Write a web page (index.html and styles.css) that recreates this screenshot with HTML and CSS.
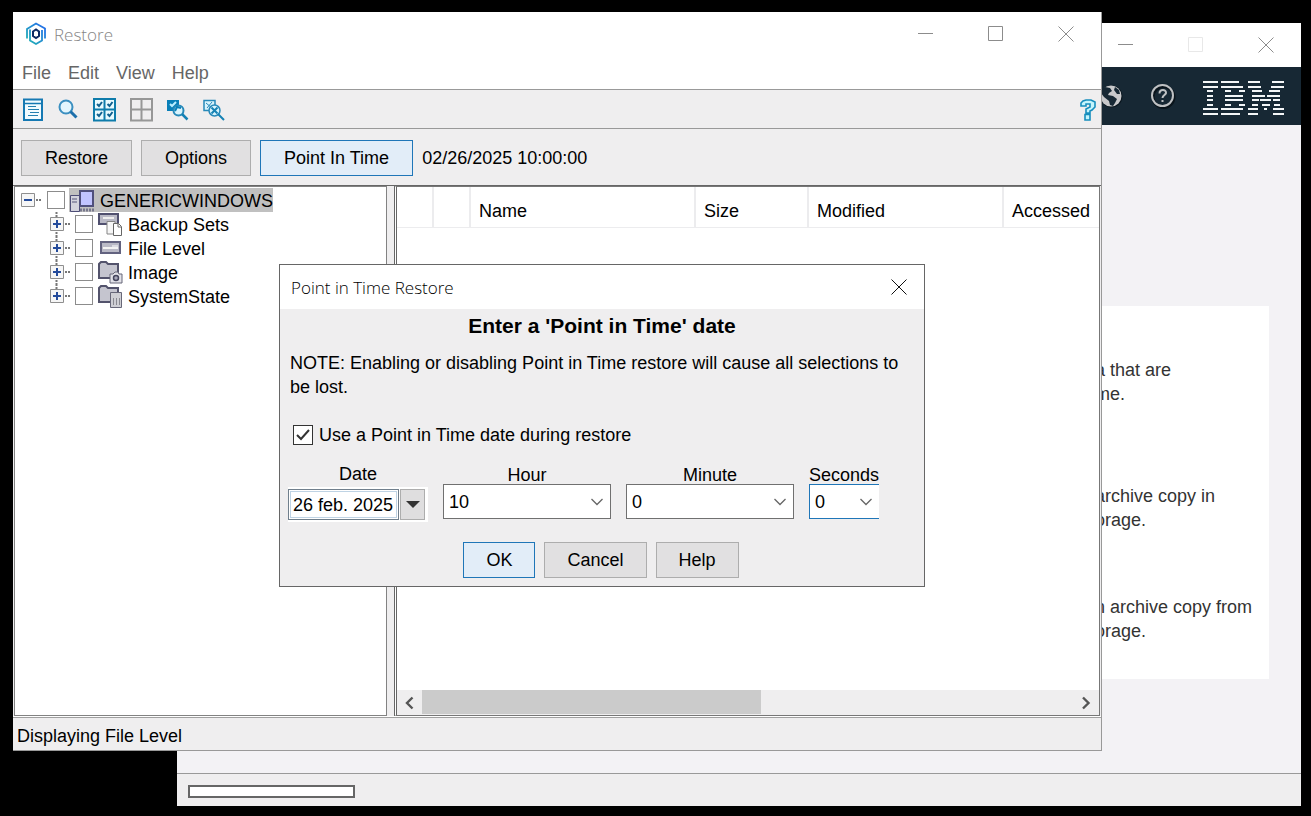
FILE: index.html
```html
<!DOCTYPE html>
<html lang="en">
<head>
<meta charset="utf-8">
<title>Restore</title>
<link rel="stylesheet" href="styles.css">
</head>
<body>
<main class="desktop">
  <section class="window hub" aria-label="Client hub">
    <div class="hub-title">
      <button class="win-btn" aria-label="Minimize hub"><svg width="16" height="16"><path d="M0 7.500h15" class="ln"/></svg></button>
      <button class="win-btn" aria-label="Maximize hub" disabled><svg width="16" height="16"><path d="M.5.500h14v14H.5z" class="ln faint"/></svg></button>
      <button class="win-btn" aria-label="Close hub"><svg width="16" height="16"><path d="M.5.500l15 15M15.500.500l-15 15" class="ln"/></svg></button>
    </div>
    <div class="banner">
      <svg class="globe" width="24" height="24" viewBox="0 0 24 24"><circle cx="12.500" cy="12.500" r="11" fill="#0b171f"/><circle cx="12" cy="12" r="10.500" fill="#c9c9cb"/><path d="M2 5l4-2 5 1 2 3-3 2-1 2 5 1 4 3-2 4-2 3-3-1-1-4-5-4-3-4zM16 3l4 3 1 4-3 0-3-4z" fill="#172834"/></svg>
      <svg class="ask" width="26" height="26" viewBox="0 0 26 26"><circle cx="13.500" cy="14" r="10.500" fill="none" stroke="#0a141b" stroke-width="3"/><circle cx="12.500" cy="12.500" r="10.500" fill="none" stroke="#bfc1c3" stroke-width="2"/><path d="M9.500 10.500c0-5 7-4.500 6.500-.5-.3 2-3.500 2.300-3.500 5M12.500 17v2" fill="none" stroke="#bfc1c3" stroke-width="2"/></svg>
      <svg class="ibm" width="81" height="34" viewBox="969 241 243 102" shape-rendering="crispEdges" role="img" aria-label="IBM"><path stroke="#f4f6f7" stroke-width="6" d="M969 244h45M1023 244h55M1104 244h36M1176 244h36M969 258h45M1023 258h67M1104 258h39M1172 258h40M981 271h18M1035 271h18M1077 271h18M1116 271h31M1168 271h31M981 285h18M1035 285h53M1116 285h38M1160 285h39M981 298h18M1035 298h53M1116 298h21M1140 298h34M1178 298h21M981 312h18M1035 312h18M1077 312h18M1116 312h17M1146 312h23M1182 312h17M969 325h45M1023 325h67M1104 325h29M1153 325h8M1180 325h32M969 339h45M1023 339h57M1104 339h29M1180 339h32"/></svg>
    </div>
    <div class="hub-body">
      <div class="hub-card">
        <p>a that are<br>me.</p>
        <p>archive copy in<br>orage.</p>
        <p>n archive copy from<br>orage.</p>
      </div>
    </div>
    <div class="hub-status"><div class="hub-progress"></div></div>
  </section>

  <section class="window restore" aria-label="Restore">
    <header class="titlebar">
      <svg width="22" height="24" viewBox="0 0 22 24" fill="none"><defs><linearGradient id="g" x1="1" y1="0" x2="0" y2="1"><stop offset="0" stop-color="#2468ee"/><stop offset="1" stop-color="#20b5b0"/></linearGradient></defs><path d="M2 16.500V7L11 1.500 20 6.500v10M5 7.500v11l6 3.500 6-3.500V8" stroke="url(#g)" stroke-width="1.800"/><path d="M8 9.500l3-2 3 2v4.500l-3 2-3-2z" stroke="#0c2a64" stroke-width="2"/></svg>
      <h1 class="title">Restore</h1>
      <div class="win-btns">
        <button class="win-btn" aria-label="Minimize"><svg width="16" height="16"><path d="M0 7.500h15" class="ln"/></svg></button>
        <button class="win-btn" aria-label="Maximize"><svg width="16" height="16"><path d="M.5.500h14v14H.5z" class="ln"/></svg></button>
        <button class="win-btn" aria-label="Close"><svg width="16" height="16"><path d="M.5.500l15 15M15.500.500l-15 15" class="ln"/></svg></button>
      </div>
    </header>
    <nav class="menu">
      <button>File</button><button>Edit</button><button>View</button><button>Help</button>
    </nav>
    <div class="toolbar">
      <button aria-label="Properties"><svg width="20" height="24" viewBox="0 0 20 24" fill="none"><path d="M1 1.500h18v20.500H1z" fill="#f2fbff" stroke="#1679b3" stroke-width="2"/><path d="M2 5.500h16" stroke="#1679b3" stroke-width="1.500"/><path d="M5 8.500h8M5 11.500h11M7 14.500h9M5 17.500h10" stroke="#237fb0"/></svg></button>
      <button aria-label="Find"><svg width="22" height="24" viewBox="0 0 22 24" fill="none"><circle cx="9" cy="9" r="6.500" fill="#e4f6fd" stroke="#3b8fc0" stroke-width="2"/><path d="M13.500 13.500l6 6" stroke="#1d6fab" stroke-width="3"/></svg></button>
      <button aria-label="Select all"><svg width="23" height="24" viewBox="0 0 23 24" fill="none"><path d="M1 1h21v21.500H1zM11.500 1v21.500M1 11.500h21" fill="#e9fbff" stroke="#0f7cab" stroke-width="2"/><path d="M4 6l2 2 3-4M14.500 6l2 2 3-4M4 16l2 2 3-4M14.500 16l2 2 3-4" stroke="#12618f" stroke-width="2"/></svg></button>
      <button aria-label="Deselect all"><svg width="23" height="24" viewBox="0 0 23 24" fill="none"><path d="M1 1h21v21.500H1zM11.500 1v21.500M1 11.500h21" stroke="#979797" stroke-width="2"/></svg></button>
      <button aria-label="Search and select"><svg width="22" height="24" viewBox="0 0 22 24" fill="none"><path d="M0 2h12v11H0z" fill="#087fb8"/><path d="M3 6l2 2 4-4" stroke="#b9edff" stroke-width="2"/><circle cx="11.500" cy="12.500" r="5" fill="#d9f4fd" stroke="#2789b9" stroke-width="2"/><path d="M8 13l2-4 4 1" stroke="#087fb8" stroke-width="2"/><path d="M15 16l5.500 5.500" stroke="#1582b5" stroke-width="2.500"/></svg></button>
      <button aria-label="Search and deselect"><svg width="22" height="24" viewBox="0 0 22 24" fill="none"><path d="M1 2.500h11v10H1z" fill="#d9f4fd" stroke="#2789b9" stroke-width="1.500"/><path d="M3 5l6 5M9 4l-5 6" stroke="#2789b9"/><circle cx="11.500" cy="12.500" r="5.500" fill="#d9f4fd" stroke="#2789b9" stroke-width="1.500"/><path d="M8.500 9.500l6 6M14.500 9.500l-6 6M15 16l6 6" stroke="#1582b5" stroke-width="2"/></svg></button>
      <button class="help-btn" aria-label="Context help"><svg width="17" height="22" viewBox="0 0 17 22"><path d="M1 6V4l2-2 3-1h5l4 2v5l-3 3-2 1v2H6v-4l4-2V5H6v2H1zM5 15.500h5V21H5z" fill="#c5f5fc" stroke="#178ebd" stroke-width="1.600"/></svg></button>
    </div>
    <div class="actions">
      <button class="btn">Restore</button>
      <button class="btn">Options</button>
      <button class="btn btn-active">Point In Time</button>
      <span>02/26/2025 10:00:00</span>
    </div>
    <div class="split">
      <div class="tree-pane">
        <ul class="tree">
          <li>
            <div class="node">
              <svg class="expander" width="26" height="24"><path d="M.5 5.500h13v13H.5z" class="exp"/><path d="M3 12h8" class="sign"/><path d="M15 12h6" class="dots"/></svg>
              <input class="tick" type="checkbox" aria-label="GENERICWINDOWS">
              <span class="node-label selected"><svg width="26" height="24" viewBox="0 0 26 24"><path d="M1.500 6.500h9v16h-9z" fill="#d2d2dc" stroke="#4d4d77"/><path d="M3 10h5M3 13h5" stroke="#55557a"/><path d="M11 2h13v15H11z" fill="#c1c4ff" stroke="#50507c" stroke-width="2"/><path d="M11 21h14" stroke="#77778c" stroke-width="3" stroke-dasharray="2 1"/></svg>GENERICWINDOWS</span>
            </div>
            <ul class="tree-kids">
              <li class="node">
                <svg class="expander" width="25" height="24"><path d="M6.500 0v5M6.500 20v4" class="dots"/><path d="M.5 5.500h13v13H.5z" class="exp"/><path d="M3 12h8M7 8v8" class="sign"/><path d="M15 12h6" class="dots"/></svg>
                <input class="tick" type="checkbox" id="n1">
                <label class="node-label" for="n1"><svg width="25" height="24" viewBox="0 0 25 24"><path d="M1 1h19v10H1z" fill="#b9b9c6" stroke="#50506f" stroke-width="2"/><path d="M5 5h11" stroke="#eee" stroke-width="2"/><path d="M9 8.500h8V21H9z" fill="#f6f6f6" stroke="#858585"/><path d="M15.500 10.500h5l3 3v9h-8z" fill="#fff" stroke="#666"/><path d="M20 11v3h3" fill="none" stroke="#666"/></svg>Backup Sets</label>
              </li>
              <li class="node">
                <svg class="expander" width="25" height="24"><path d="M6.500 0v5M6.500 20v4" class="dots"/><path d="M.5 5.500h13v13H.5z" class="exp"/><path d="M3 12h8M7 8v8" class="sign"/><path d="M15 12h6" class="dots"/></svg>
                <input class="tick" type="checkbox" id="n2">
                <label class="node-label" for="n2"><svg width="25" height="24" viewBox="0 0 25 24"><path d="M3 5h19v11H3z" fill="#b9b9c6" stroke="#62627f" stroke-width="2"/><path d="M5 11h15" stroke="#f3f3f3" stroke-width="2"/><path d="M14 9h6" stroke="#fff"/></svg>File Level</label>
              </li>
              <li class="node">
                <svg class="expander" width="25" height="24"><path d="M6.500 0v5M6.500 20v4" class="dots"/><path d="M.5 5.500h13v13H.5z" class="exp"/><path d="M3 12h8M7 8v8" class="sign"/><path d="M15 12h6" class="dots"/></svg>
                <input class="tick" type="checkbox" id="n3">
                <label class="node-label" for="n3"><svg width="25" height="24" viewBox="0 0 25 24"><path d="M1 18V3l2-2h5l2 2h10v14H1" fill="#c5c5cf" stroke="#53536c" stroke-width="2"/><path d="M12 13h3l2-2h3l1 2h3v9H12z" fill="#e2e2e8" stroke="#676778"/><circle cx="18" cy="17" r="2.500" fill="#aab" stroke="#45455d" stroke-width="1.500"/></svg>Image</label>
              </li>
              <li class="node">
                <svg class="expander" width="25" height="24"><path d="M6.500 0v5" class="dots"/><path d="M.5 5.500h13v13H.5z" class="exp"/><path d="M3 12h8M7 8v8" class="sign"/><path d="M15 12h6" class="dots"/></svg>
                <input class="tick" type="checkbox" id="n4">
                <label class="node-label" for="n4"><svg width="25" height="24" viewBox="0 0 25 24"><path d="M1 18V3l2-2h5l2 2h10v14H1" fill="#c5c5cf" stroke="#53536c" stroke-width="2"/><path d="M12.500 7.500h11v15h-11z" fill="#cfcfd4" stroke="#676778"/><path d="M15.500 13v7M18.500 13v7M21.500 13v7" stroke="#8a8a91"/></svg>SystemState</label>
              </li>
            </ul>
          </li>
        </ul>
      </div>
      <div class="list-pane">
        <table class="files">
          <colgroup><col class="c-sel"><col class="c-icon"><col class="c-name"><col class="c-size"><col class="c-mod"><col></colgroup>
          <thead><tr><th></th><th></th><th scope="col">Name</th><th scope="col">Size</th><th scope="col">Modified</th><th scope="col">Accessed</th></tr></thead>
        </table>
        <div class="scroll">
          <button aria-label="Scroll left"><svg width="12" height="14"><path d="M8.500 1.500L3 7l5.500 5.500" class="arrow"/></svg></button>
          <div class="track"><div class="thumb"></div></div>
          <button aria-label="Scroll right"><svg width="12" height="14"><path d="M2 1.500L7.500 7 2 12.500" class="arrow"/></svg></button>
        </div>
      </div>
    </div>
    <footer class="status">Displaying File Level</footer>
  </section>

  <section class="dialog" role="dialog" aria-labelledby="dlg">
    <header class="dlg-title">
      <h2 class="title" id="dlg">Point in Time Restore</h2>
      <button class="win-btn" aria-label="Close dialog"><svg width="16" height="16"><path d="M.5.500l15 15M15.500.500l-15 15" class="ln dark"/></svg></button>
    </header>
    <div class="dlg-body">
      <h3>Enter a 'Point in Time' date</h3>
      <p class="note">NOTE: Enabling or disabling Point in Time restore will cause all selections to be lost.</p>
      <label class="use"><span class="check"><input type="checkbox" checked><svg width="20" height="20"><path d="M4 10l4 4 8-9" fill="none" stroke="#333" stroke-width="2"/></svg></span>Use a Point in Time date during restore</label>
      <div class="fields">
        <div class="field date"><label for="date">Date</label>
          <div class="date-box"><input id="date" type="text" value="26 feb. 2025"><button aria-label="Pick a date"><svg width="14" height="8"><path d="M0 0h14L7 7z" fill="#333"/></svg></button></div>
        </div>
        <div class="field"><label for="hour">Hour</label>
          <div class="combo"><select id="hour"><option>10</option></select><svg width="12" height="8"><path d="M.5 1l5.500 5.500L11.500 1" class="chev"/></svg></div></div>
        <div class="field"><label for="minute">Minute</label>
          <div class="combo"><select id="minute"><option>0</option></select><svg width="12" height="8"><path d="M.5 1l5.500 5.500L11.500 1" class="chev"/></svg></div></div>
        <div class="field seconds"><label for="seconds">Seconds</label>
          <div class="combo"><select id="seconds"><option>0</option></select><svg width="12" height="8"><path d="M.5 1l5.500 5.500L11.500 1" class="chev"/></svg></div></div>
      </div>
      <div class="dlg-btns"><button class="btn btn-active">OK</button><button class="btn">Cancel</button><button class="btn">Help</button></div>
    </div>
  </section>
</main>
</body>
</html>
```
FILE: styles.css
```css
* { box-sizing: border-box; }
body { margin: 0; background: #000; color: #000; font: 18px/24px "Liberation Sans", Arial, sans-serif; }
button, input, select { font: inherit; color: inherit; margin: 0; }
button { padding: 0; border: 0; background: none; }
svg { display: block; flex: none; }
h1, h2, h3, p, ul { margin: 0; padding: 0; }
ul { list-style: none; }
.desktop { position: relative; height: 100vh; overflow: hidden; background: #000; }
.window { position: absolute; display: flex; flex-direction: column; overflow: hidden; }
.title { padding-top: 2px; font: 300 17px/24px "Open Sans", "Noto Sans", sans-serif; }
.win-btn { display: grid; place-items: center; width: 70px; }
.ln { fill: none; stroke: #8c8c8c; }
.faint { stroke: #e8e8e8; }
.dark { stroke: #111; }

/* Hub window behind */
.hub { left: 177px; top: 23px; right: 10px; bottom: 10px; background: #f3f2f5; }
.hub-title { display: flex; justify-content: flex-end; height: 44px; background: #fff; }
.banner { display: flex; align-items: center; justify-content: flex-end; height: 58px; padding-right: 17px; background: #172834; }
.globe { margin-right: 27px; }
.ask { margin-right: 27px; }
.ibm { margin-top: 3px; }
.hub-body { flex: 1; padding: 181px 32px 94px 32px; }
.hub-card { display: flex; flex-direction: column; height: 100%; padding: 52px 10px 0 886px; background: #fff; color: #333; white-space: nowrap; }
.hub-card p + p { margin-top: 78px; }
.hub-card p + p + p { margin-top: 63px; }
.hub-status { height: 33px; padding: 11px; border-top: 1px solid #999; background: #efeeef; }
.hub-progress { width: 167px; height: 13px; border: 2px solid #666; background: #fff; }

/* Restore window */
.restore { left: 13px; top: 12px; right: 209px; bottom: 65px; border: solid #999; border-width: 0 1px 1px 0; background: #efeeef; }
.titlebar { display: flex; align-items: center; gap: 7px; height: 44px; padding-left: 12px; background: #fff; color: #858585; }
.win-btns { display: flex; margin-left: auto; }
.menu { display: flex; gap: 17px; height: 34px; padding: 1px 9px 0; border-bottom: 1px solid #999; background: #fff; color: #666; }
.toolbar { display: flex; align-items: center; height: 39px; gap: 14px; padding: 2px 4px 0 10px; border-bottom: 1px solid #999; }
.help-btn { margin-left: auto; }
.actions { display: flex; align-items: center; gap: 9px; height: 56px; padding: 1px 8px 0; }
.btn { height: 36px; padding: 0 22px; border: 1px solid #adadad; background: #e1e0e1; }
.actions .btn { padding: 0 23px; }
.btn-active { border-color: #1f76b8; background: #e2edf8; }
.split { display: flex; flex: 1; gap: 7px; min-height: 0; padding: 0 1px; border-top: 1px solid #666; border-bottom: 1px solid #fff; }
.tree-pane { width: 373px; border: 1px solid #828282; background: #fff; }
.tree { padding: 1px 0 0 6px; }
.tree-kids { padding-left: 29px; }
.node { display: flex; align-items: center; height: 24px; }
.exp { fill: #f6f6f6; stroke: #8e8e8e; }
.sign { stroke: #244b9b; stroke-width: 2; }
.dots { stroke: #777; stroke-width: 2; stroke-dasharray: 2 1; }
.tick { appearance: none; width: 18px; height: 18px; border: 1px solid #8c8c8c; background: #fff; }
.node-label { display: flex; align-items: center; gap: 5px; height: 24px; margin-left: 4px; padding-top: 2px; }
.tree-kids .node-label { margin-left: 5px; }
.selected { background: #c0c0c0; }
.list-pane { display: flex; flex: 1; flex-direction: column; justify-content: space-between; min-width: 0; border: 1px solid #777; border-left: 3px double #666; background: #fff; }
.files { width: 100%; border-collapse: separate; border-spacing: 0; table-layout: fixed; }
.files th { height: 41px; padding: 7px 8px 0; border-right: 2px solid #ececee; border-bottom: 1px solid #ececee; font-weight: 400; text-align: left; }
.files th:last-child { border-right: 0; }
.c-sel { width: 37px; }
.c-icon { width: 37px; }
.c-name { width: 225px; }
.c-size { width: 113px; }
.c-mod { width: 195px; }
.scroll { display: flex; height: 25px; background: #efeeef; }
.scroll button { display: grid; place-items: center; width: 25px; }
.arrow { fill: none; stroke: #555; stroke-width: 2.400; }
.track { flex: 1; }
.thumb { width: 52%; height: 24px; background: #cbcbcb; }
.status { height: 33px; padding: 6px 4px; border-top: 1px solid #a0a0a0; }

/* Point in time dialog */
.dialog { position: absolute; left: 279px; top: 264px; width: 646px; border: 1px solid #666; background: #efeeef; }
.dlg-title { display: flex; align-items: center; justify-content: space-between; height: 44px; padding-left: 11px; background: #fff; }
.dlg-title .win-btn { width: 50px; }
.dlg-body { padding: 5px 10px 8px; }
.dlg-body h3 { font-size: 21px; line-height: 24px; text-align: center; }
.note { margin-top: 13px; }
.use { display: flex; align-items: center; gap: 6px; margin: 24px 0 0 3px; }
.check { display: grid; width: 20px; height: 20px; }
.check > * { grid-area: 1 / 1; }
.check input { appearance: none; width: 20px; height: 20px; border: 1px solid #333; background: #fff; }
.check svg { z-index: 1; pointer-events: none; }
.fields { display: flex; gap: 15px; margin: 15px 0 0 -2px; }
.field { width: 168px; padding-top: 5px; }
.field > label { display: block; line-height: 17px; text-align: center; }
.date { width: 140px; padding-top: 0; }
.date > label { line-height: 25px; }
.seconds { width: 70px; }
.date-box { display: flex; height: 35px; gap: 1px; padding: 2px 3px 2px 0; background: #fff; }
.date-box input { flex: 1; min-width: 0; padding: 0 4px; border: 1px solid #707f8c; outline: 1px solid #bfd3e4; outline-offset: -3px; background: #fff; }
.date-box button { display: grid; place-items: center; width: 25px; border: 1px solid #adadad; background: #dfdedf; }
.combo { display: grid; align-items: center; }
.combo > * { grid-area: 1 / 1; }
.combo select { appearance: none; width: 100%; height: 35px; padding: 0 5px; border: 1px solid #707070; border-radius: 0; background: #fff; }
.combo svg { justify-self: end; margin-right: 8px; pointer-events: none; }
.seconds select { border-color: #1f76b8; border-right: 0; }
.seconds svg { margin-right: 7px; }
.chev { fill: none; stroke: #666; stroke-width: 1.300; }
.dlg-btns { display: flex; justify-content: center; gap: 9px; margin-top: 20px; padding-right: 2px; }
```
